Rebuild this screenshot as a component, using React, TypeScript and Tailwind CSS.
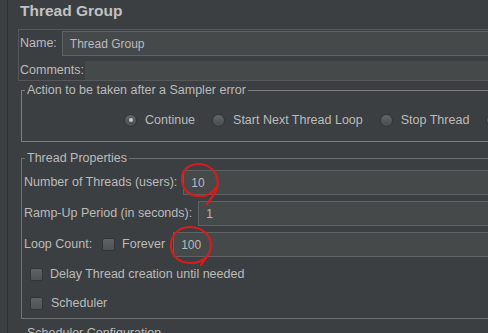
import React from "react";

function Radio({ checked }: { checked?: boolean }) {
  return (
    <span className="w-[13px] h-[13px] shrink-0 rounded-full border border-[#323537] bg-gradient-to-b from-[#626568] to-[#4a4d4f] flex items-center justify-center">
      {checked && <span className="w-[4px] h-[4px] rounded-full bg-[#c8c8c8]" />}
    </span>
  );
}

function Checkbox() {
  return (
    <span className="block w-[13px] h-[13px] shrink-0 rounded-[2px] border border-[#323537] bg-gradient-to-b from-[#5f6264] to-[#505355]" />
  );
}

function Field({ value, className = "" }: { value: string; className?: string }) {
  return (
    <div className={`flex-1 h-full bg-[#45494a] border border-[#5f6264] flex items-center pl-[7px] text-[12px] text-[#bbbbbb] ${className}`}>
      {value}
    </div>
  );
}

export default function App() {
  const actions = [
    { label: "Continue", checked: true },
    { label: "Start Next Thread Loop" },
    { label: "Stop Thread" },
  ];

  return (
    <div className="relative w-[488px] h-[333px] overflow-hidden bg-[#3c3f41] flex text-[#bbbbbb] font-['Liberation_Sans',Arial,sans-serif] text-[12.5px]">
      {/* tree divider */}
      <div className="w-[8px] shrink-0 border-r border-[#2e3032]" />

      <div className="w-[520px] shrink-0 pl-[10px]">
        {/* Title */}
        <div className="h-[29px] pt-[2px] pl-[2px] text-[15.5px] leading-[18px] font-bold text-[#c2c2c2]">
          Thread Group
        </div>

        {/* Name / Comments */}
        <div className="h-[52px] border border-[#555759] pt-[1px] pl-[1px] flex flex-col">
          <div className="flex items-center h-[25px] gap-[5px]">
            <span>Name:</span>
            <Field value="Thread Group" className="pl-[5px]" />
          </div>
          <div className="flex items-center h-[19px] mt-[5px] gap-[1px]">
            <span>Comments:</span>
            <div className="flex-1 h-full bg-[#45494a]" />
          </div>
        </div>

        {/* Sampler error action */}
        <fieldset className="min-w-0 ml-[3px] mt-[2px] border border-[#7c7e80] pb-[11px]">
          <legend className="ml-[3px] px-[2px] leading-[14px]">Action to be taken after a Sampler error</legend>
          <div className="flex items-center h-[20px] mt-[13px] pl-[102px] gap-[17px] whitespace-nowrap">
            {actions.map((a) => (
              <label key={a.label} className="flex items-center gap-[8px] shrink-0">
                <Radio checked={a.checked} />
                <span>{a.label}</span>
              </label>
            ))}
            <Radio />
          </div>
        </fieldset>

        {/* Thread Properties */}
        <fieldset className="min-w-0 ml-[3px] mt-[9px] border border-[#6f7173]">
          <legend className="ml-[3px] px-[2px] leading-[14px]">Thread Properties</legend>
          <div className="pt-[5px] pl-[2px] flex flex-col">
            <div className="flex items-center h-[25px] gap-[6px]">
              <span className="whitespace-nowrap">Number of Threads (users):</span>
              <Field value="10" />
            </div>
            <div className="flex items-center h-[25px] mt-[6px] gap-[6px]">
              <span className="whitespace-nowrap">Ramp-Up Period (in seconds):</span>
              <Field value="1" />
            </div>
            <div className="flex items-center h-[25px] mt-[6px]">
              <span className="whitespace-nowrap">Loop Count:</span>
              <span className="ml-[10px] flex"><Checkbox /></span>
              <span className="ml-[7px]">Forever</span>
              <div className="ml-[8px] flex-1 h-full flex">
                <Field value="100" />
              </div>
            </div>
            <div className="flex items-center h-[29px] mt-[3px] ml-[6px] gap-[7px]">
              <Checkbox />
              <span>Delay Thread creation until needed</span>
            </div>
            <div className="flex items-center h-[29px] ml-[6px] gap-[8px]">
              <Checkbox />
              <span>Scheduler</span>
            </div>
          </div>
        </fieldset>

        {/* Scheduler Configuration */}
        <fieldset className="min-w-0 ml-[3px] mt-[7px] border border-[#6f7173] h-[40px]">
          <legend className="ml-[3px] px-[2px] leading-[14px]">Scheduler Configuration</legend>
        </fieldset>
      </div>

      {/* hand-drawn annotations */}
      <svg className="absolute inset-0 pointer-events-none" width="488" height="333" viewBox="0 0 488 333">
        <path
          d="M 207 204 C 210 199, 215 195, 217 188 C 220 175, 211 164, 199 164 C 188 164, 181 171, 182 181 C 183 192, 192 197, 203 196 C 209 195, 213 192, 215 188"
          fill="none"
          stroke="#d81c1c"
          strokeWidth="2.2"
          strokeLinecap="round"
        />
        <path
          d="M 201 265 C 203 261, 208 257, 210 251 C 214 238, 204 227, 190 227 C 178 227, 170 236, 171 247 C 172 258, 181 263, 191 263 C 198 263, 204 260, 207 256"
          fill="none"
          stroke="#d81c1c"
          strokeWidth="2.2"
          strokeLinecap="round"
        />
      </svg>
    </div>
  );
}
